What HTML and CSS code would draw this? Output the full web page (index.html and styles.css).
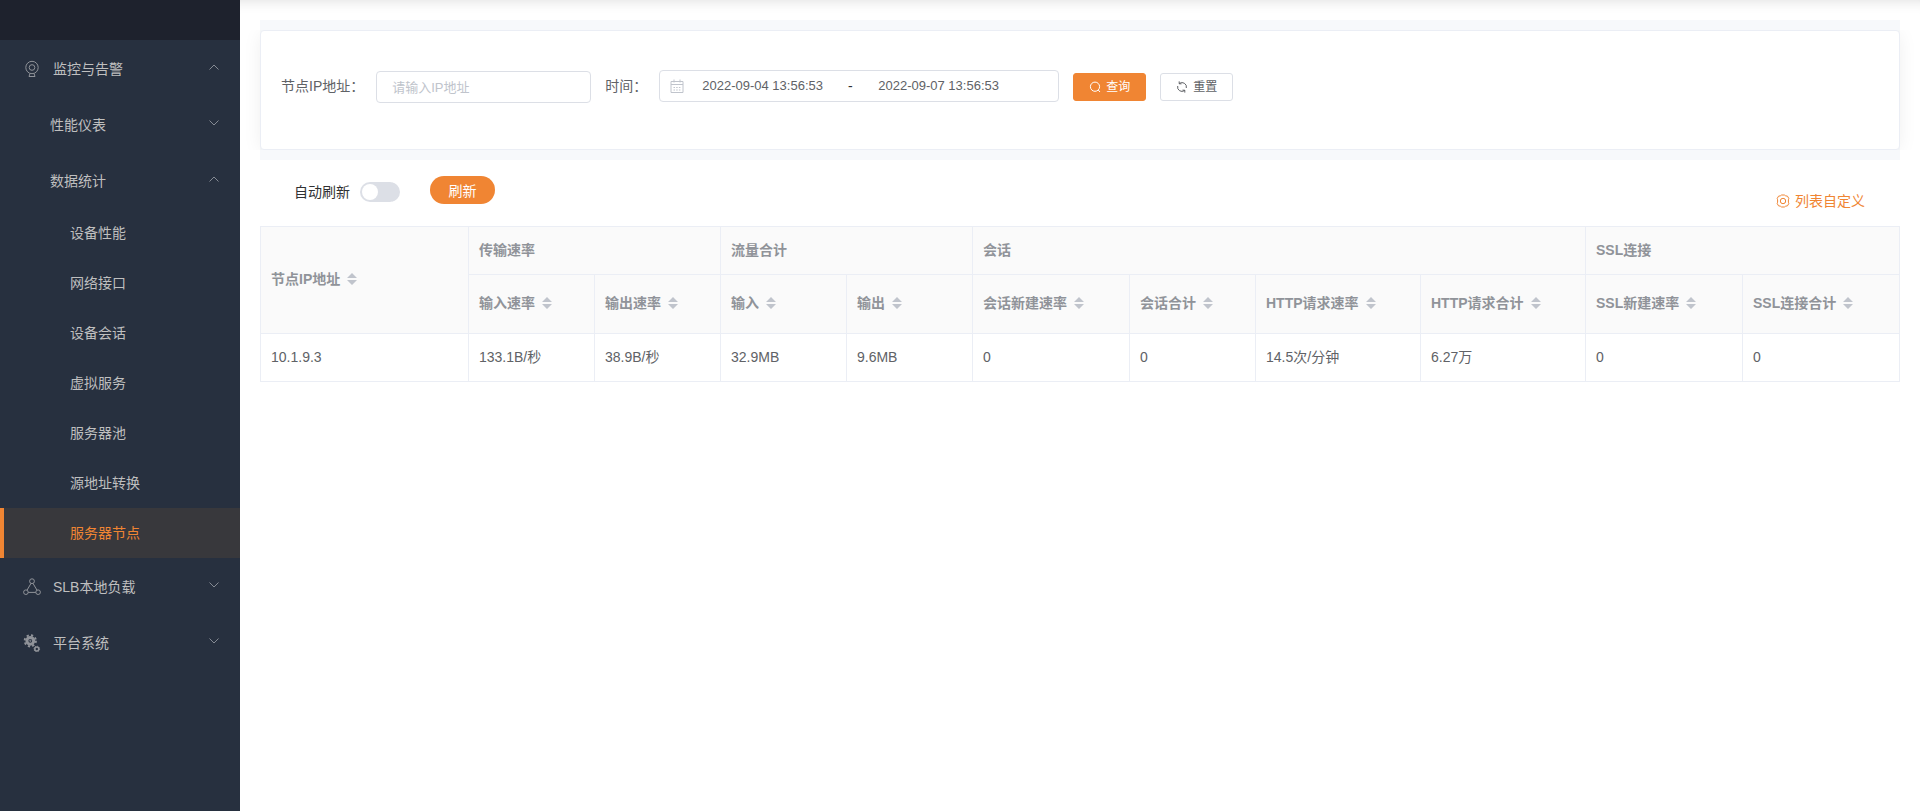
FILE: index.html
```html
<!DOCTYPE html>
<html lang="zh-CN">
<head>
  <meta charset="UTF-8" />
  <meta name="viewport" content="width=device-width, initial-scale=1.0"/>
  <title>服务器节点</title>
  <link rel="stylesheet" href="styles.css">
</head>
<body>
  <svg width="0" height="0" class="sprite">
    <symbol id="down" viewBox="0 0 10 6"><path d="M.5 .5 5 5 9.5 .5"/></symbol>
    <symbol id="up" viewBox="0 0 10 6"><path d="M.5 5.5 5 1 9.5 5.5"/></symbol>
    <symbol id="sort" viewBox="0 0 10 12"><path d="M0 5 5 0 10 5zM0 7 5 12 10 7z"/></symbol>
  </svg>

  <aside class="sidebar">
    <div class="logo"></div>
    <nav>
      <a href="#" class="item">
        <svg class="icon" viewBox="0 0 18 18"><circle cx="9" cy="7.5" r="6.2"/><circle cx="9" cy="7.5" r="2.8"/><path d="M7 13.5 6 16.5h6l-1-3"/></svg>
        <span>监控与告警</span>
        <svg class="arrow"><use href="#up"/></svg>
      </a>
      <a href="#" class="item sub"><span>性能仪表</span><svg class="arrow"><use href="#down"/></svg></a>
      <a href="#" class="item sub"><span>数据统计</span><svg class="arrow"><use href="#up"/></svg></a>
      <a href="#" class="leaf">设备性能</a>
      <a href="#" class="leaf">网络接口</a>
      <a href="#" class="leaf">设备会话</a>
      <a href="#" class="leaf">虚拟服务</a>
      <a href="#" class="leaf">服务器池</a>
      <a href="#" class="leaf">源地址转换</a>
      <a href="#" class="leaf active">服务器节点</a>
      <a href="#" class="item">
        <svg class="icon" viewBox="0 0 18 18"><circle cx="9" cy="3.2" r="2.4"/><circle cx="2.9" cy="14.2" r="2.3"/><circle cx="15.1" cy="14.2" r="2.3"/><path d="M8 5.4 4 12.2M10 5.4l4 6.8M5.2 14.4h7.6"/></svg>
        <span>SLB本地负载</span>
        <svg class="arrow"><use href="#down"/></svg>
      </a>
      <a href="#" class="item">
        <svg class="icon" viewBox="0 0 18 18"><circle cx="7.3" cy="6.8" r="3.4" stroke-width="3"/><circle cx="7.3" cy="6.8" r="5.6" stroke-width="2" stroke-dasharray="2.2 2.2"/><circle cx="7.3" cy="6.8" r=".6"/><circle cx="13.8" cy="15" r="2" stroke-width="1.6"/><circle cx="13.8" cy="15" r="2.8" stroke-width="1" stroke-dasharray="1.1 1.1"/></svg>
        <span>平台系统</span>
        <svg class="arrow"><use href="#down"/></svg>
      </a>
    </nav>
  </aside>

  <main class="main">
    <div class="topbar"></div>
    <div class="search">
      <form class="card">
        <label for="ip">节点IP地址：</label>
        <input id="ip" class="ip" type="text" placeholder="请输入IP地址">
        <label for="start">时间：</label>
        <div class="range">
          <svg class="calendar" viewBox="0 0 14 14"><path d="M1 2.5h12v11H1zM1 5.5h12M4 .5v3M10 .5v3"/><path d="M3.5 8.5h7M3.5 11h7" stroke-dasharray="1.5 1.2"/></svg>
          <input id="start" type="text" value="2022-09-04 13:56:53">
          <span>-</span>
          <input id="end" type="text" value="2022-09-07 13:56:53" aria-label="结束时间">
        </div>
        <button type="button" class="btn primary">
          <svg viewBox="0 0 12 12"><circle cx="6" cy="5.7" r="4.6"/><path d="M9.2 9 11 11"/></svg>查询
        </button>
        <button type="button" class="btn">
          <svg viewBox="0 0 12 12"><path d="M3.2 2.6A4.4 4.4 0 0 1 10.3 7M1.7 5A4.4 4.4 0 0 0 8.8 9.4M3.2 .4v2.4h2.4M8.8 11.6V9.2H6.4"/></svg>重置
        </button>
      </form>
    </div>

    <div class="toolbar">
      <label for="auto">自动刷新</label>
      <input id="auto" class="switch" type="checkbox" role="switch">
      <button type="button" class="refresh">刷新</button>
      <a href="#" class="custom">
        <svg viewBox="0 0 14 14"><path d="M4.4 1.8 5.6 1h2.8l1.2.8 1.9.4 1.3 2.3-.4 1.3v2.4l.4 1.3-1.3 2.3-1.9.4-1.2.8H5.6l-1.2-.8-1.9-.4-1.3-2.3.4-1.3V5.8l-.4-1.3 1.3-2.3z"/><circle cx="7" cy="7" r="2.7"/></svg>列表自定义
      </a>
    </div>

    <table class="table">
      <colgroup>
        <col class="w-ip"><col class="w-s"><col class="w-s"><col class="w-s"><col class="w-s">
        <col class="w-m"><col class="w-s"><col class="w-l"><col class="w-l"><col class="w-m"><col class="w-m">
      </colgroup>
      <thead>
        <tr class="group">
          <th rowspan="2">节点IP地址<svg class="sort"><use href="#sort"/></svg></th>
          <th colspan="2">传输速率</th>
          <th colspan="2">流量合计</th>
          <th colspan="4">会话</th>
          <th colspan="2">SSL连接</th>
        </tr>
        <tr class="names">
          <th>输入速率<svg class="sort"><use href="#sort"/></svg></th>
          <th>输出速率<svg class="sort"><use href="#sort"/></svg></th>
          <th>输入<svg class="sort"><use href="#sort"/></svg></th>
          <th>输出<svg class="sort"><use href="#sort"/></svg></th>
          <th>会话新建速率<svg class="sort"><use href="#sort"/></svg></th>
          <th>会话合计<svg class="sort"><use href="#sort"/></svg></th>
          <th>HTTP请求速率<svg class="sort"><use href="#sort"/></svg></th>
          <th>HTTP请求合计<svg class="sort"><use href="#sort"/></svg></th>
          <th>SSL新建速率<svg class="sort"><use href="#sort"/></svg></th>
          <th>SSL连接合计<svg class="sort"><use href="#sort"/></svg></th>
        </tr>
      </thead>
      <tbody>
        <tr>
          <td>10.1.9.3</td>
          <td>133.1B/秒</td>
          <td>38.9B/秒</td>
          <td>32.9MB</td>
          <td>9.6MB</td>
          <td>0</td>
          <td>0</td>
          <td>14.5次/分钟</td>
          <td>6.27万</td>
          <td>0</td>
          <td>0</td>
        </tr>
      </tbody>
    </table>
  </main>
</body>
</html>
```
FILE: styles.css
```css
* { box-sizing: border-box; }
body { margin: 0; display: flex; min-height: 100vh; background: #fff; color: #303133; font: 14px/20px "Liberation Sans", "Noto Sans CJK SC", sans-serif; }
a { color: inherit; text-decoration: none; }
svg { fill: none; stroke: currentColor; }
input, button { font: inherit; color: inherit; margin: 0; }
.sprite { position: absolute; }

/* sidebar */
.sidebar { flex: none; width: 240px; background: #27303f; color: #bfbfbf; }
.logo { height: 40px; background: #1e222d; }
.item { display: flex; align-items: center; height: 56px; padding: 2px 21px 0 23px; }
.item.sub { padding-left: 50px; }
.icon { width: 18px; height: 18px; margin-right: 12px; color: #909399; }
.arrow { width: 10px; height: 6px; margin: 0 0 4px auto; color: #868b94; }
.leaf { display: flex; align-items: center; height: 50px; padding-left: 70px; }
.active { background: #38383c; color: #f08533; border-left: 4px solid #f08533; padding-left: 66px; }

/* content */
.main { flex: 1; min-width: 0; padding: 0 20px; overflow: hidden; }
.topbar { height: 20px; margin: 0 -20px; box-shadow: inset 0 14px 14px -14px rgba(0, 0, 0, .15); }
.search { background: #f7f9fb; padding: 10px 0; }
.card { display: flex; align-items: flex-start; height: 120px; padding: 39px 20px 0; background: #fff; border: 1px solid #ebeef5; border-radius: 4px; box-shadow: 0 2px 20px -2px rgba(0, 0, 0, .08); clip-path: inset(0 -20px); color: #606266; }
.card label { line-height: 32px; }
.ip { width: 215px; height: 32px; margin: 1px 14px 0 12px; padding: 0 15px; border: 1px solid #dcdfe6; border-radius: 4px; }
.ip::placeholder { color: #c0c4cc; font-size: 13px; }
.range { display: flex; align-items: center; width: 400px; height: 32px; margin: 0 14px 0 12px; padding: 0 10px; border: 1px solid #dcdfe6; border-radius: 4px; }
.range input { width: 156px; padding: 0 0 0 18px; border: 0; background: none; font-size: 13px; }
.range span { width: 20px; color: #303133; text-align: center; }
.calendar { flex: none; width: 14px; height: 14px; color: #c0c4cc; }
.btn { display: flex; align-items: center; justify-content: center; gap: 5px; width: 73px; height: 28px; margin: 3px 14px 0 0; padding: 0; background: #fff; border: 1px solid #dcdfe6; border-radius: 3px; font-size: 12px; }
.btn svg { width: 12px; height: 12px; }
.primary { background: #f08533; border-color: #f08533; color: #fff; }

.toolbar { display: flex; align-items: flex-start; height: 66px; padding: 16px 35px 0 34px; }
.toolbar label { margin-top: 6px; }
.switch { appearance: none; width: 40px; height: 20px; margin: 6px 30px 0 10px; border-radius: 10px; background: #dcdfe6; }
.switch::before { content: ""; display: block; width: 16px; height: 16px; margin: 2px; border-radius: 50%; background: #fff; }
.refresh { width: 65px; height: 28px; padding: 1px 0 0; border: 0; border-radius: 14px; background: #f08533; color: #fff; }
.custom { display: flex; align-items: center; gap: 5px; margin: 15px 0 0 auto; color: #f08533; }
.custom svg { width: 14px; height: 14px; }

/* table */
.table { width: 100%; table-layout: fixed; border-collapse: separate; border-spacing: 0; border: solid #ebeef5; border-width: 1px 0 0 1px; color: #606266; }
.table th, .table td { padding: 0 10px 2px; border: solid #ebeef5; border-width: 0 1px 1px 0; text-align: left; white-space: nowrap; }
.table th { background: #fafafa; color: #909399; }
.group { height: 48px; }
.names { height: 59px; }
.table tbody tr { height: 48px; }
.w-ip { width: 208px; }
.w-s { width: 126px; }
.w-m { width: 157px; }
.w-l { width: 165px; }
.sort { width: 10px; height: 12px; margin-left: 7px; vertical-align: -1px; fill: #c0c4cc; stroke: none; }
```
